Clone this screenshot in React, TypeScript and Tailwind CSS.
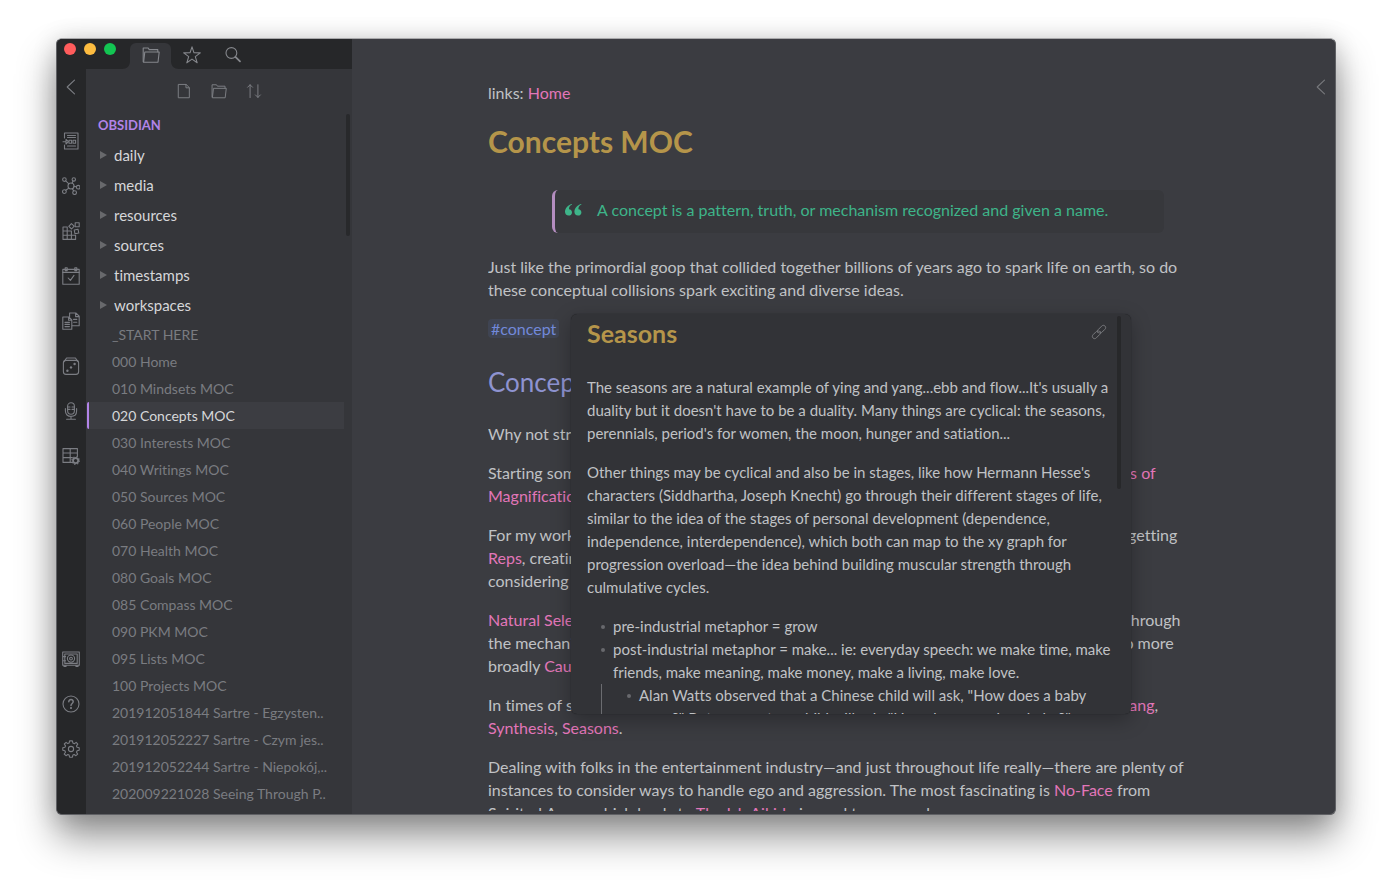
import type { ReactNode } from "react";

function Icon({ size = 18, children, className = "" }: { size?: number; children: ReactNode; className?: string }) {
  return (
    <svg
      width={size}
      height={size}
      viewBox="0 0 18 18"
      fill="none"
      stroke="currentColor"
      strokeWidth="1.1"
      strokeLinejoin="round"
      strokeLinecap="round"
      className={className}
      aria-hidden="true"
    >
      {children}
    </svg>
  );
}

const folderShape = (
  <>
    <path d="M1.2 15.8 V2 H6.2 L7.2 3.6 H15.8 V5.8" />
    <path d="M1.6 16.2 L2.8 6 H17.2 L16 16.2 Z" />
  </>
);

const ribbonTop: { label: string; art: ReactNode }[] = [
  {
    label: "Open quick switcher",
    art: (
      <>
        <path d="M2.5 6 V1 H16 V17 H2.5 V13" />
        <path d="M5.5 3.5 H13.5 M5.5 5.5 H13.5 M5.5 14 H13.5" />
        <path d="M1 9.7 H4 M4 7.5 L6.5 9.7 L4 12 Z" />
        <rect x="7" y="8.2" width="2.6" height="3" />
        <rect x="11" y="8.2" width="2.6" height="3" />
      </>
    ),
  },
  {
    label: "Open graph view",
    art: (
      <>
        <circle cx="9" cy="9" r="3" />
        <circle cx="2.4" cy="2.6" r="1.8" />
        <circle cx="11.8" cy="2.4" r="1.7" />
        <circle cx="16.2" cy="10.2" r="1.8" />
        <circle cx="2.4" cy="14.6" r="1.9" />
        <circle cx="12.6" cy="15.6" r="1.9" />
        <path d="M3.7 3.9 L6.9 6.9 M11 4 L10.1 6.2 M12 9.4 L14.4 9.8 M3.8 13.3 L6.8 11.1 M10.3 11.7 L11.7 13.9" />
      </>
    ),
  },
  {
    label: "Manage plugins",
    art: (
      <>
        <path d="M1 5 H5.2 V17.4 H1 Z M5.2 9 H9.4 V17.4 H5.2 M9.4 13.2 H13.6 V17.4 H9.4 M1 9 H5.2 M1 13.2 H9.4" />
        <path d="M9.4 1.6 L12.2 4.2 L9.6 7 L6.8 4.4 Z" />
        <rect x="13.2" y="0.8" width="4" height="4" />
        <path d="M12.2 8 L16 7.2 L16.8 11 L13 11.8 Z" />
      </>
    ),
  },
  {
    label: "Open today's note",
    art: (
      <>
        <rect x="0.8" y="2.4" width="16.4" height="14.8" />
        <path d="M0.8 5.4 H17.2 M3.2 0.8 H5.2 V3.6 H3.2 Z M12.8 0.8 H14.8 V3.6 H12.8 Z M6.2 11 L8.4 13.4 L12 8.4" />
      </>
    ),
  },
  {
    label: "Insert template",
    art: (
      <>
        <path d="M0.8 5 H6.8 L9.8 8 V17.2 H0.8 Z M6.6 5.2 V8.2 H9.6" />
        <path d="M7.6 4.6 V1 H13.8 L17.2 4.2 V13.8 H10.2 M13.6 1.2 V4.6 H17 M11.6 7.4 H14.8 M11.6 10.2 H14.8" />
        <path d="M3 10.4 H7.4 M3 12.4 H7.4 M3 14.6 H7.4" />
      </>
    ),
  },
  {
    label: "Open random note",
    art: (
      <>
        <rect x="1.4" y="3.4" width="15.2" height="14" rx="2.6" />
        <path d="M2.2 4.4 L4.6 1 H13.4 L15.8 4.4" />
        <g fill="currentColor" stroke="none">
          <circle cx="5.4" cy="13.8" r="1.2" />
          <circle cx="9" cy="10.4" r="1.2" />
          <circle cx="12.6" cy="7" r="1.2" />
        </g>
      </>
    ),
  },
  {
    label: "Start recording",
    art: (
      <>
        <rect x="5.6" y="0.8" width="6.8" height="11.4" rx="3.4" />
        <path d="M3.4 6.6 V9 C3.4 12.4 5.8 14.4 9 14.4 C12.2 14.4 14.6 12.4 14.6 9 V6.6 M9 14.4 V16.8 M4.6 17.2 H13.4 M5.8 5 H8 M5.8 7.4 H8 M10 5 H12.2 M10 7.4 H12.2" />
      </>
    ),
  },
  {
    label: "Manage tables",
    art: (
      <>
        <path d="M10.6 15.4 H1 V1.6 H15.4 V9.4 M1 6 H15.4 M1 10.6 H10.4 M8.2 1.6 V15.4" />
        <circle cx="13.6" cy="13.6" r="2.6" strokeWidth="1.8" />
        <circle cx="13.6" cy="13.6" r="3.8" strokeDasharray="1.2 1.8" strokeLinecap="butt" />
      </>
    ),
  },
];

const ribbonBottom: { label: string; art: ReactNode }[] = [
  {
    label: "Open another vault",
    art: (
      <>
        <rect x="0.7" y="2" width="16.6" height="13.2" />
        <rect x="2.8" y="4" width="12.4" height="9.4" />
        <circle cx="9" cy="8.6" r="3.6" />
        <circle cx="9" cy="8.6" r="1.4" />
        <path d="M2 15.4 V16.4 H4 V15.4 M14 15.4 V16.4 H16 V15.4 M1.4 6.6 H3.6 M1.4 10.8 H3.6" />
      </>
    ),
  },
  {
    label: "Help",
    art: (
      <>
        <circle cx="9" cy="9" r="8" />
        <path d="M6.8 6.8 C6.8 3.8 11.3 3.9 11.2 6.8 C11.1 8.5 9 8.5 9 10.6" strokeWidth="1.5" />
        <circle cx="9" cy="13" r="0.5" fill="currentColor" />
      </>
    ),
  },
  {
    label: "Settings",
    art: (
      <>
        <circle cx="9" cy="9" r="2.6" />
        <path d="M7.6 0.9 H10.4 L10.9 3.1 L12.3 3.7 L14.2 2.4 L15.8 4.1 L14.5 5.9 L15.1 7.2 L17.2 7.7 V10.3 L15.1 10.8 L14.5 12.2 L15.7 14.1 L13.9 15.7 L12.2 14.5 L10.9 15.1 L10.4 17.2 H7.6 L7.1 15.1 L5.8 14.5 L4 15.7 L2.2 14 L3.5 12.2 L2.9 10.8 L0.8 10.3 V7.7 L2.9 7.2 L3.5 5.9 L2.3 4 L4.1 2.4 L5.8 3.6 L7.1 3.1 Z" />
      </>
    ),
  },
];

const folders = ["daily", "media", "resources", "sources", "timestamps", "workspaces"];

const files = [
  "_START HERE",
  "000 Home",
  "010 Mindsets MOC",
  "020 Concepts MOC",
  "030 Interests MOC",
  "040 Writings MOC",
  "050 Sources MOC",
  "060 People MOC",
  "070 Health MOC",
  "080 Goals MOC",
  "085 Compass MOC",
  "090 PKM MOC",
  "095 Lists MOC",
  "100 Projects MOC",
  "201912051844 Sartre - Egzysten..",
  "201912052227 Sartre - Czym jes..",
  "201912052244 Sartre - Niepokój,..",
  "202009221028 Seeing Through P..",
];

function RibbonButton({ label, art }: { label: string; art: ReactNode }) {
  return (
    <button type="button" aria-label={label} className="flex h-[45px] items-center justify-center">
      <Icon>{art}</Icon>
    </button>
  );
}

function Ribbon() {
  return (
    <nav className="flex w-[29px] shrink-0 flex-col bg-[#262729] pr-[2px] pb-[43px] text-[#7b7d83]">
      <button type="button" aria-label="Collapse sidebar" className="mb-[13px] flex h-9 items-center justify-center">
        <Icon>
          <path d="M12.5 2.2 L5.2 9 L12.5 15.8" />
        </Icon>
      </button>
      {ribbonTop.map((r) => (
        <RibbonButton key={r.label} {...r} />
      ))}
      <div className="mt-auto flex flex-col">
        {ribbonBottom.map((r) => (
          <RibbonButton key={r.label} {...r} />
        ))}
      </div>
    </nav>
  );
}

function TitleBar() {
  return (
    <header className="flex h-[30px] items-end bg-[#262729] pl-[7px] text-[#85878c]">
      <div className="flex gap-2 self-start pt-1">
        <span className="size-3 rounded-full bg-[#ff5c5c]" />
        <span className="size-3 rounded-full bg-[#fdbc40]" />
        <span className="size-3 rounded-full bg-[#13c552]" />
      </div>
      <div className="ml-[14px] flex">
        <button
          type="button"
          aria-label="File explorer"
          className="relative flex h-[26px] w-[41px] items-center justify-center rounded-t-md bg-[#35363a] pb-[3px]"
        >
          <svg width="8" height="8" viewBox="0 0 8 8" className="absolute bottom-0 -left-2" aria-hidden="true">
            <path d="M8 0 V8 H0 C5 8 8 5 8 0 Z" fill="#35363a" />
          </svg>
          <Icon>{folderShape}</Icon>
          <svg width="8" height="8" viewBox="0 0 8 8" className="absolute -right-2 bottom-0" aria-hidden="true">
            <path d="M0 0 V8 H8 C3 8 0 5 0 0 Z" fill="#35363a" />
          </svg>
        </button>
        <button type="button" aria-label="Starred" className="flex h-[26px] w-[41px] items-center justify-center pb-[3px]">
          <Icon>
            <path d="M9 0.8 L11 6.8 L17.3 6.9 L12.3 10.6 L14.2 16.8 L9 13.1 L3.8 16.8 L5.7 10.6 L0.7 6.9 L7 6.8 Z" />
          </Icon>
        </button>
        <button type="button" aria-label="Search" className="flex h-[26px] w-[41px] items-center justify-center pb-[3px]">
          <Icon>
            <circle cx="7.4" cy="7" r="5.4" />
            <path d="M11.4 10.8 L16 15.4" strokeWidth="1.8" />
          </Icon>
        </button>
      </div>
    </header>
  );
}

function FileExplorer() {
  return (
    <div className="relative flex min-w-0 flex-1 flex-col bg-[#35363a]">
      <div className="flex h-11 shrink-0 items-center justify-center gap-[19px] text-[#7d7f84]">
        <button type="button" aria-label="New note">
          <Icon size={16}>
            <path d="M3 1.6 H11.4 L15 5.2 V16.6 H3 Z M11.2 1.8 V5.4 H14.8" />
          </Icon>
        </button>
        <button type="button" aria-label="New folder">
          <Icon size={16}>{folderShape}</Icon>
        </button>
        <button type="button" aria-label="Change sort order">
          <Icon size={16}>
            <path d="M4.6 16.4 V2 M1.8 4.8 L4.6 2 L7.4 4.8 M13.4 2 V16.2 M10.6 13.4 L13.4 16.2 L16.2 13.4" />
          </Icon>
        </button>
      </div>
      <h2 className="flex h-[27px] shrink-0 items-center pb-px pl-3 text-[13px] font-bold text-[#b284e8]">OBSIDIAN</h2>
      <ul>
        {folders.map((f) => (
          <li key={f}>
            <button type="button" className="flex h-[30px] w-full items-center gap-[7px] pl-[14px] text-[15px] text-[#d6d7d9]">
              <svg width="7" height="8" viewBox="0 0 7 8" aria-hidden="true" className="mb-px">
                <path d="M0 0 L7 4 L0 8 Z" fill="#68696c" />
              </svg>
              {f}
            </button>
          </li>
        ))}
      </ul>
      <ul className="mt-px mr-2 ml-px">
        {files.map((f, i) => (
          <li key={f}>
            <a
              href="#"
              className={
                i === 3
                  ? "flex h-[27px] items-center rounded-l-xs border-l-2 border-[#b284e8] bg-[#3c3d42] pl-[23px] text-sm whitespace-nowrap text-[#d6d7d9]"
                  : "flex h-[27px] items-center border-l-2 border-transparent pl-[23px] text-sm whitespace-nowrap text-[#7a7c81]"
              }
            >
              {f}
            </a>
          </li>
        ))}
      </ul>
      <div className="absolute top-[45px] right-[2px] h-[122px] w-1 rounded-full bg-[#28292b]" />
    </div>
  );
}

function Link({ children }: { children: ReactNode }) {
  return (
    <a href="#" className="text-[#e276b9]">
      {children}
    </a>
  );
}

function Preview() {
  return (
    <aside className="absolute top-[275px] left-[83px] h-[400px] w-[560px] overflow-hidden rounded-md bg-[#323337] px-4 pt-1 text-[15px] leading-[23px] shadow-[0_6px_20px_rgba(0,0,0,0.28),0_0_1px_rgba(0,0,0,0.6)]">
      <div className="flex h-[30px] items-center justify-between pr-2">
        <h2 className="text-[25px] font-bold text-[#b5954a]">Seasons</h2>
        <a href="#" aria-label="Open link" className="mb-[2px] text-[#7b7c80]">
          <Icon size={16}>
            <path d="M8 10 C6.6 8.6 7 7.4 8 6.4 L12 2.4 C13.2 1.2 14.6 1.2 15.7 2.3 C16.8 3.4 16.8 4.8 15.6 6 L12.2 9.4 C11.2 10.4 10 10.6 8.8 9.8" />
            <path d="M10 8 C11.4 9.4 11 10.6 10 11.6 L6 15.6 C4.8 16.8 3.4 16.8 2.3 15.7 C1.2 14.6 1.2 13.2 2.4 12 L5.8 8.6 C6.8 7.6 8 7.4 9.2 8.2" />
          </Icon>
        </a>
      </div>
      <div className="mt-7 flex flex-col gap-4 whitespace-nowrap">
        <p>
          The seasons are a natural example of ying and yang...ebb and flow...It's usually a
          <br />
          duality but it doesn't have to be a duality. Many things are cyclical: the seasons,
          <br />
          perennials, period's for women, the moon, hunger and satiation...
        </p>
        <p>
          Other things may be cyclical and also be in stages, like how Hermann Hesse's
          <br />
          characters (Siddhartha, Joseph Knecht) go through their different stages of life,
          <br />
          similar to the idea of the stages of personal development (dependence,
          <br />
          independence, interdependence), which both can map to the xy graph for
          <br />
          progression overload—the idea behind building muscular strength through
          <br />
          culmulative cycles.
        </p>
        <ul className="pl-[14px]">
          <li className="flex items-start gap-2">
            <span className="mt-[10px] size-1 shrink-0 rounded-full bg-[#68696d]" />
            pre-industrial metaphor = grow
          </li>
          <li>
            <div className="flex items-start gap-2">
              <span className="mt-[10px] size-1 shrink-0 rounded-full bg-[#68696d]" />
              <span>
                post-industrial metaphor = make... ie: everyday speech: we make time, make
                <br />
                friends, make meaning, make money, make a living, make love.
              </span>
            </div>
            <ul className="border-l border-[#6b6c70] pl-[25px]">
              <li className="flex items-start gap-2">
                <span className="mt-[10px] size-1 shrink-0 rounded-full bg-[#68696d]" />
                <span>
                  Alan Watts observed that a Chinese child will ask, "How does a baby
                  <br />
                  grow?" But our western child will ask, "How do you make a baby?"
                </span>
              </li>
            </ul>
          </li>
        </ul>
      </div>
      <div className="absolute top-[2px] right-[10px] h-[173px] w-1 rounded-full bg-[#27282a]" />
    </aside>
  );
}

function Note() {
  return (
    <article className="relative w-[700px] text-base leading-[23px] text-[#c0c2c5]">
      <div className="flex h-full flex-col gap-4 overflow-hidden pt-[42px] whitespace-nowrap">
        <p>
          links: <Link>Home</Link>
        </p>
        <h1 className="-mb-[2px] text-3xl leading-[42px] font-bold text-[#b5954a]">Concepts MOC</h1>
        <blockquote className="mt-[14px] mr-6 mb-[6px] ml-16 flex h-[43px] shrink-0 items-center rounded-md border-l-3 border-[#b48dc0] bg-[#37383c] pb-1 pl-[10px] text-[#3eb489]">
          <svg width="17" height="12" viewBox="0 0 17 12" fill="currentColor" className="mr-[15px]" aria-hidden="true">
            <path d="M6.6 0 C3 1.2 0 4 0 7.8 C0 10 1.4 11.6 3.6 11.6 C5.6 11.6 7 10.2 7 8.4 C7 6.6 5.8 5.4 4 5.2 C4 3 5 1.6 7.2 0.6 Z" />
            <path d="M16 0 C12.4 1.2 9.4 4 9.4 7.8 C9.4 10 10.8 11.6 13 11.6 C15 11.6 16.4 10.2 16.4 8.4 C16.4 6.6 15.2 5.4 13.4 5.2 C13.4 3 14.4 1.6 16.6 0.6 Z" />
          </svg>
          A concept is a pattern, truth, or mechanism recognized and given a name.
        </blockquote>
        <p>
          Just like the primordial goop that collided together billions of years ago to spark life on earth, so do
          <br />
          these conceptual collisions spark exciting and diverse ideas.
        </p>
        <p>
          <a href="#" className="rounded-sm bg-[#3f4452] px-[3px] text-[#7289da]">
            #concept
          </a>
        </p>
        <h2 className="mt-[6px] mb-[3px] text-[26px] leading-[41px] text-[#8e93d0]">Concept Collisions</h2>
        <p>Why not strike two ideas together and see what happens?</p>
        <p>
          Starting somewhere familiar, we can look at how one idea shifts as it moves across the <Link>Levels of</Link>
          <br />
          <Link>Magnification</Link>.
        </p>
        <p>
          For my workouts at the gym, the ideas that collide most often are progression overload and getting
          <br />
          <Link>Reps</Link>, creating habits that last over time, and
          <br />
          considering how they grow.
        </p>
        <p>
          <Link>Natural Selection</Link> is a concept that describes how all sorts of living things change over time through
          <br />
          the mechanisms of variation and inheritance, and the very same pattern can be applied on to more
          <br />
          broadly <Link>Causality</Link>.
        </p>
        <p>
          In times of stress, it helps to remember how the opposites can combine, such as in <Link>Yin and Yang</Link>,
          <br />
          <Link>Synthesis</Link>, <Link>Seasons</Link>.
        </p>
        <p>
          Dealing with folks in the entertainment industry—and just throughout life really—there are plenty of
          <br />
          instances to consider ways to handle ego and aggression. The most fascinating is <Link>No-Face</Link> from
          <br />
          Spirited Away, which leads to <Link>The Ish Aikido</Link> is used to approach.
        </p>
      </div>
      <Preview />
    </article>
  );
}

export default function App() {
  return (
    <div className="flex h-screen flex-col bg-white px-14 pt-[38px] pb-[74px] font-['Lato','Noto_Sans',sans-serif] [font-variant-ligatures:none]">
      <div className="flex min-h-0 flex-1 overflow-hidden rounded-md border border-[#606165] border-t-[#a9a9ab] bg-[#3b3c41] shadow-[0_22px_38px_rgba(0,0,0,0.42),0_2px_24px_rgba(0,0,0,0.16)]">
        <div className="flex w-[295px] shrink-0 flex-col">
          <TitleBar />
          <div className="flex min-h-0 flex-1 overflow-hidden">
            <Ribbon />
            <FileExplorer />
          </div>
        </div>
        <main className="flex min-w-0 flex-1 items-stretch pb-[3px]">
          <div className="flex min-w-0 flex-1 justify-center pl-[19px]">
            <Note />
          </div>
          <button type="button" aria-label="Expand sidebar" className="flex h-24 w-[30px] shrink-0 items-center justify-center pl-px text-[#77787c]">
            <Icon>
              <path d="M12.5 2.2 L5.2 9 L12.5 15.8" />
            </Icon>
          </button>
        </main>
      </div>
    </div>
  );
}
